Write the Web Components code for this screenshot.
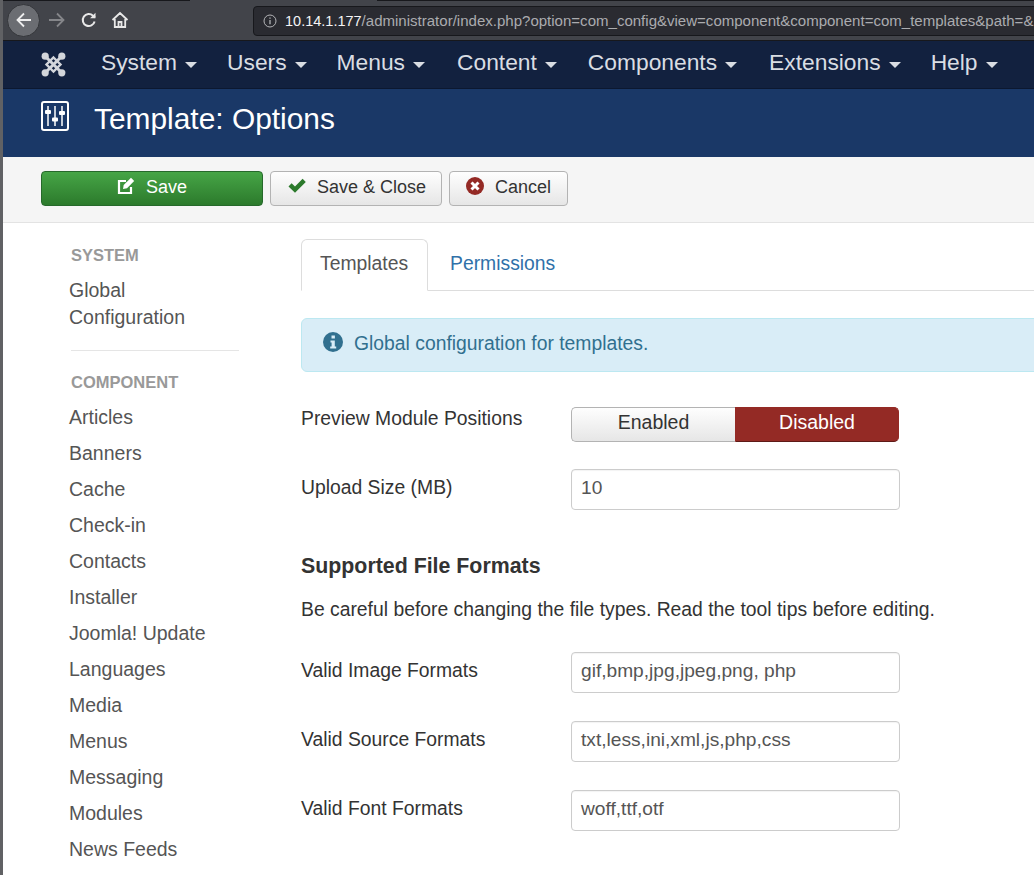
<!DOCTYPE html>
<html>
<head>
<meta charset="utf-8">
<title>Template: Options</title>
<style>
html, body { margin: 0; padding: 0; height: 875px; overflow: hidden; background: #fff; }
body { font-family: "Liberation Sans", Arial, sans-serif; font-size: 19.33px; line-height: 27px; color: #333; border-left: 3px solid #606164; box-sizing: border-box; }
</style>
</head>
<body>

<browser-bar url-host="10.14.1.177" url-path="/administrator/index.php?option=com_config&amp;view=component&amp;component=com_templates&amp;path=&amp;"></browser-bar>
<admin-nav></admin-nav>
<title-bar>Template: Options</title-bar>
<action-bar></action-bar>

<page-body>
  <side-menu slot="side"></side-menu>
  <tab-strip></tab-strip>
  <info-box>Global configuration for templates.</info-box>

  <form-row label="Preview Module Positions" label-top="-2" style="margin-top:35px"><on-off></on-off></form-row>
  <form-row label="Upload Size (MB)" style="margin-top:27px"><text-box value="10"></text-box></form-row>

  <section-head title="Supported File Formats">Be careful before changing the file types. Read the tool tips before editing.</section-head>

  <form-row label="Valid Image Formats" style="margin-top:29px"><text-box value="gif,bmp,jpg,jpeg,png, php"></text-box></form-row>
  <form-row label="Valid Source Formats" style="margin-top:28px"><text-box value="txt,less,ini,xml,js,php,css"></text-box></form-row>
  <form-row label="Valid Font Formats" style="margin-top:28px"><text-box value="woff,ttf,otf"></text-box></form-row>
</page-body>

<script>
class BrowserBar extends HTMLElement {
  constructor() {
    super();
    var shadow = this.attachShadow({mode: 'open'});
    shadow.innerHTML = '<style>' +
    ':host { display: flex; height: 41px; background: #42444a; align-items: center; box-sizing: border-box; border-bottom: 1px solid #17181c; position: relative; }' +
    '.round { width: 33px; height: 33px; border-radius: 50%; background: #6b6d72; border: 1px solid #34363a; box-sizing: border-box; margin-left: 4px; display: flex; align-items: center; justify-content: center; }' +
    'svg { display: block; flex: none; }' +
    '.tabline { position: absolute; left: 0; top: 0; width: 187px; height: 1px; background: #17181c; }' +
    '.tabline.rest { left: 374px; width: 660px; }' +
    '.url { position: absolute; left: 250px; right: -4px; top: 6px; height: 30px; background: #2a2b31; border: 1px solid #17181c; border-radius: 4px; display: flex; align-items: center; font: 14.5px/20px "Liberation Sans", sans-serif; color: #abacaf; white-space: nowrap; overflow: hidden; box-sizing: border-box; }' +
    '.url b { font-weight: normal; color: #f4f4f5; }' +
    '.url span { font-size: 15.04px; }' +
    '.url svg { margin: 0 8px 0 9px; }' +
    '</style>' +
    '<div class="tabline"></div><div class="tabline rest"></div>' +
    '<div class="round"><svg width="18" height="18" viewBox="0 0 18 18" fill="none" stroke="#eee" stroke-width="1.8"><path d="M16 9H2.5M9 2.5 2.5 9 9 15.5"/></svg></div>' +
    '<svg style="margin-left:8px" width="18" height="18" viewBox="0 0 18 18" fill="none" stroke="#85868a" stroke-width="1.8"><path d="M1 9h14M9 2.5 15.5 9 9 15.5"/></svg>' +
    '<svg style="margin-left:14px" width="18" height="18" viewBox="0 0 18 18" fill="none" stroke="#e8e8e8" stroke-width="2"><path d="M14.6 10.5A6 6 0 1 1 13 4.8L15 6.6"/><path d="M15.5 1.8v5.4h-5.4" fill="#e8e8e8" stroke="none"/></svg>' +
    '<svg style="margin-left:13px" width="18" height="18" viewBox="0 0 18 18" fill="none" stroke="#e8e8e8" stroke-width="1.8"><path d="M1.5 9 9 2l7.5 7M3.8 8v8h10.4V8M7.5 16v-5h3v5"/></svg>' +
    '<div class="url"><svg width="14" height="14" viewBox="0 0 14 14" fill="none" stroke="#b4b5b8" stroke-width="1"><circle cx="7" cy="7" r="6"/><path d="M7 6v4.2M7 3.6v1.2" stroke-width="1.3"/></svg>' +
    '<b id="host"></b><span id="path"></span></div>';
    shadow.getElementById('host').textContent = this.getAttribute('url-host');
    shadow.getElementById('path').textContent = this.getAttribute('url-path');
  }
}

class AdminNav extends HTMLElement {
  constructor() {
    super();
    var shadow = this.attachShadow({mode: 'open'});
    // gap after each item, the reference has hinted widths so they differ a little
    var items = [['System', 30], ['Users', 30], ['Menus', 32], ['Content', 31], ['Components', 32], ['Extensions', 30], ['Help', 0]];
    shadow.innerHTML = '<style>' +
    ':host { display: flex; height: 48px; background: #12213f; align-items: center; box-sizing: border-box; border-bottom: 1px solid #0c1830; padding: 0 0 5px 38px; color: #d9dde3; font-size: 22.8px; white-space: nowrap; }' +
    '.logo { width: 25px; height: 25px; margin: 4px 35px 0 0; flex: none; }' +
    '.item { display: flex; align-items: center; }' +
    '.caret { width: 0; height: 0; border: 6px solid transparent; border-top-color: #d9dde3; border-bottom: 0; margin-left: 8px; margin-top: 6px; }' +
    '</style>' +
    // joomla logo: corner knobs, a crossing X and a diamond weave
    '<svg class="logo" viewBox="0 0 25 25" fill="none" stroke="#d3d6db">' +
    '<path d="M5 5 20 20M20 5 5 20" stroke-width="3"/>' +
    '<path d="M12.5 5.5 19.5 12.5 12.5 19.5 5.5 12.5Z" stroke-width="2.4"/>' +
    '<circle cx="4.2" cy="4.2" r="3.6" fill="#d3d6db" stroke="none"/><circle cx="20.8" cy="4.2" r="3.6" fill="#d3d6db" stroke="none"/><circle cx="4.2" cy="20.8" r="3.6" fill="#d3d6db" stroke="none"/><circle cx="20.8" cy="20.8" r="3.6" fill="#d3d6db" stroke="none"/>' +
    '</svg>' +
    items.map(function(it) { return '<div class="item" style="margin-right:' + it[1] + 'px">' + it[0] + '<span class="caret"></span></div>'; }).join('');
  }
}

class TitleBar extends HTMLElement {
  constructor() {
    super();
    var shadow = this.attachShadow({mode: 'open'});
    shadow.innerHTML = '<style>' +
    ':host { display: flex; height: 68px; background: #1a3867; color: #fff; align-items: flex-start; box-sizing: border-box; padding: 12px 0 0 38px; font-size: 29.9px; line-height: 36px; }' +
    'svg { width: 28px; height: 30px; margin-right: 25px; flex: none; }' +
    '</style>' +
    '<svg viewBox="0 0 28 30" fill="none" stroke="#fff" stroke-width="2"><rect x="1" y="1" width="26" height="28" rx="2"/><path d="M7 5v20M14 5v20M21 5v20" stroke-width="1.5"/><rect x="4" y="9" width="6" height="4" rx="1" fill="#fff" stroke="none"/><rect x="11" y="16.5" width="6" height="4" rx="1" fill="#fff" stroke="none"/><rect x="18" y="10" width="6" height="4" rx="1" fill="#fff" stroke="none"/></svg>' +
    '<slot></slot>';
  }
}

class ActionBar extends HTMLElement {
  constructor() {
    super();
    var shadow = this.attachShadow({mode: 'open'});
    shadow.innerHTML = '<style>' +
    ':host { display: flex; height: 66px; background: #f5f5f5; border-bottom: 1px solid #e3e3e3; box-sizing: border-box; padding: 14px 0 0 38px; gap: 7px; align-items: flex-start; font-size: 18px; }' +
    'button { font: inherit; height: 35px; padding: 0 0 2px; display: flex; align-items: center; justify-content: center; gap: 11px; border-radius: 4px; border: 1px solid #b3b3b3; background: linear-gradient(#fefefe, #e6e6e6); color: #333; box-sizing: border-box; }' +
    '.save { width: 222px; background: linear-gradient(#46a546, #2c7a2c); border-color: #26692b; color: #fff; }' +
    '.close { width: 172px; padding-left: 2px; }' +
    '.cancel { width: 119px; }' +
    'svg { display: block; margin-bottom: 3px; }' +
    '</style>' +
    '<button class="save"><svg width="18" height="18" viewBox="0 0 18 18" fill="none" stroke="#fff" stroke-width="2.2"><path d="M14 10v6H2V4h7"/><path d="M6 12 6.7 8 14 .8 17.2 4 10 11.3Z" fill="#fff" stroke="none"/></svg>Save</button>' +
    '<button class="close"><svg width="18" height="16" viewBox="0 0 18 16"><path d="M.5 8.5 3.6 5.2 7 8.4 14.6 .8 17.8 4 7 14.8Z" fill="#2c7a2c"/></svg>Save &amp; Close</button>' +
    '<button class="cancel"><svg width="18" height="18" viewBox="0 0 18 18"><circle cx="9" cy="9" r="9" fill="#942a25"/><path d="M5.5 5.5l7 7M12.5 5.5l-7 7" stroke="#fff" stroke-width="3"/></svg>Cancel</button>';
  }
}

class PageBody extends HTMLElement {
  constructor() {
    super();
    var shadow = this.attachShadow({mode: 'open'});
    shadow.innerHTML = '<style>' +
    ':host { display: flex; }' +
    '.side { width: 298px; flex: none; }' +
    '.main { width: 760px; flex: none; padding-top: 16px; }' +
    '</style>' +
    '<div class="side"><slot name="side"></slot></div>' +
    '<div class="main"><slot></slot></div>';
  }
}

class SideMenu extends HTMLElement {
  constructor() {
    super();
    var shadow = this.attachShadow({mode: 'open'});
    var links = ['Articles', 'Banners', 'Cache', 'Check-in', 'Contacts', 'Installer', 'Joomla! Update', 'Languages', 'Media', 'Menus', 'Messaging', 'Modules', 'News Feeds'];
    shadow.innerHTML = '<style>' +
    ':host { display: block; padding: 19px 0 0 66px; color: #555; font-size: 19.5px; }' +
    '.head { font-size: 16.5px; font-weight: bold; color: #999; line-height: 27px; padding-left: 2px; }' +
    '.global { width: 150px; margin-top: 8px; }' +
    'hr { width: 168px; height: 1px; border: 0; background: #e5e5e5; margin: 19px 0 18px 2px; }' +
    '.link { line-height: 27px; margin-bottom: 9px; }' +
    '.head + .link { margin-top: 8px; }' +
    '</style>' +
    '<div class="head">SYSTEM</div><div class="global">Global Configuration</div><hr>' +
    '<div class="head">COMPONENT</div>' +
    links.map(function(name) { return '<div class="link">' + name + '</div>'; }).join('');
  }
}

class TabStrip extends HTMLElement {
  constructor() {
    super();
    var shadow = this.attachShadow({mode: 'open'});
    shadow.innerHTML = '<style>' +
    ':host { display: flex; border-bottom: 1px solid #ddd; height: 52px; box-sizing: border-box; }' +
    'div { padding: 10px 18px 0; line-height: 27px; height: 52px; box-sizing: border-box; }' +
    '.on { border: 1px solid #ddd; border-bottom: 1px solid #fff; border-radius: 6px 6px 0 0; background: #fff; color: #555; width: 127px; }' +
    '.off { color: #3071a9; padding-left: 22px; padding-top: 11px; }' +
    '</style>' +
    '<div class="on">Templates</div><div class="off">Permissions</div>';
  }
}

class InfoBox extends HTMLElement {
  constructor() {
    super();
    var shadow = this.attachShadow({mode: 'open'});
    shadow.innerHTML = '<style>' +
    ':host { display: flex; margin-top: 27px; height: 54px; box-sizing: border-box; background: #d9edf7; border: 1px solid #bce8f1; border-radius: 6px; color: #31708f; align-items: center; padding: 0 0 4px 21px; gap: 11px; }' +
    'svg { display: block; margin-bottom: 3px; }' +
    '</style>' +
    '<svg width="20" height="20" viewBox="0 0 20 20"><circle cx="10" cy="10" r="10" fill="#31708f"/><rect x="8.5" y="3.5" width="3.4" height="3" fill="#d9edf7"/><path d="M7.5 8.5h4.3v6h1.4v2H7.2v-2h1.4v-4h-1.1Z" fill="#d9edf7"/></svg>' +
    '<span><slot></slot></span>';
  }
}

class FormRow extends HTMLElement {
  constructor() {
    super();
    var shadow = this.attachShadow({mode: 'open'});
    shadow.innerHTML = '<style>' +
    ':host { display: flex; color: #333; }' +
    '.label { width: 270px; flex: none; }' +
    '</style>' +
    '<div class="label"></div><slot></slot>';
    var label = shadow.querySelector('.label');
    label.textContent = this.getAttribute('label');
    // label sits a bit lower than the top of the field
    label.style.marginTop = (this.getAttribute('label-top') || 5) + 'px';
  }
}

class OnOff extends HTMLElement {
  constructor() {
    super();
    var shadow = this.attachShadow({mode: 'open'});
    shadow.innerHTML = '<style>' +
    ':host { display: flex; height: 35px; text-align: center; line-height: 29px; font-size: 19.5px; }' +
    'div { box-sizing: border-box; height: 35px; }' +
    '.a { width: 164px; border: 1px solid #b3b3b3; border-right: 0; border-radius: 5px 0 0 5px; background: linear-gradient(#fefefe, #e6e6e6); color: #333; }' +
    '.b { width: 164px; background: #942a25; border: 1px solid #942a25; border-bottom-color: #5e1a17; border-radius: 0 5px 5px 0; color: #fff; }' +
    '</style>' +
    '<div class="a">Enabled</div><div class="b">Disabled</div>';
  }
}

class TextBox extends HTMLElement {
  constructor() {
    super();
    var shadow = this.attachShadow({mode: 'open'});
    shadow.innerHTML = '<style>' +
    ':host { display: block; width: 329px; height: 41px; box-sizing: border-box; border: 1px solid #ccc; border-radius: 4px; padding: 3px 9px; color: #555; background: #fff; line-height: 30px; font-size: 19.15px; box-shadow: inset 0 1px 1px rgba(0,0,0,.05); }' +
    '</style><span></span>';
    shadow.querySelector('span').textContent = this.getAttribute('value');
  }
}

class SectionHead extends HTMLElement {
  constructor() {
    super();
    var shadow = this.attachShadow({mode: 'open'});
    shadow.innerHTML = '<style>' +
    ':host { display: block; margin-top: 43px; }' +
    'h3 { margin: 0 0 16px; font-size: 21.35px; line-height: 27px; font-weight: bold; color: #333; }' +
    '</style>' +
    '<h3></h3><slot></slot>';
    shadow.querySelector('h3').textContent = this.getAttribute('title');
  }
}

window.customElements.define('browser-bar', BrowserBar);
window.customElements.define('admin-nav', AdminNav);
window.customElements.define('title-bar', TitleBar);
window.customElements.define('action-bar', ActionBar);
window.customElements.define('page-body', PageBody);
window.customElements.define('side-menu', SideMenu);
window.customElements.define('tab-strip', TabStrip);
window.customElements.define('info-box', InfoBox);
window.customElements.define('form-row', FormRow);
window.customElements.define('on-off', OnOff);
window.customElements.define('text-box', TextBox);
window.customElements.define('section-head', SectionHead);
</script>
</body>
</html>
